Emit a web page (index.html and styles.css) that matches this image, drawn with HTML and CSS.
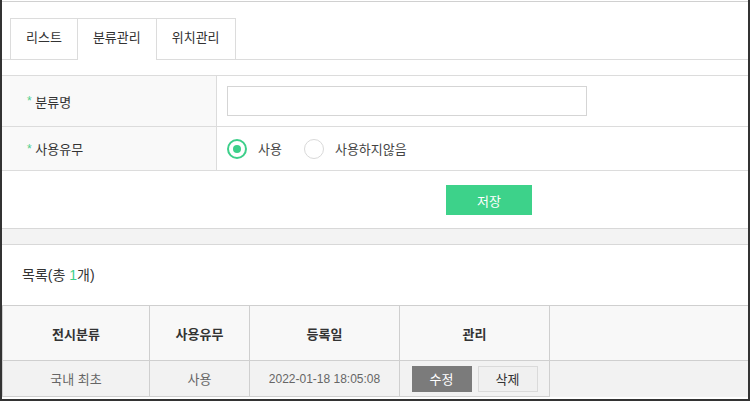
FILE: index.html
```html
<!DOCTYPE html>
<html lang="ko">
<head>
<meta charset="utf-8">
<title>분류관리</title>
<link rel="stylesheet" href="styles.css">
</head>
<body>
<div class="frame">
  <div class="page">
    <div class="tabs">
      <div class="tab">리스트</div>
      <div class="tab active">분류관리</div>
      <div class="tab">위치관리</div>
    </div>

    <div class="form">
      <div class="row row-name">
        <div class="label"><span class="req">*</span> 분류명</div>
        <div class="value"><input class="text-input" type="text"></div>
      </div>
      <div class="row row-use">
        <div class="label"><span class="req">*</span> 사용유무</div>
        <div class="value">
          <span class="radio checked"></span><span class="radio-label">사용</span>
          <span class="radio"></span><span class="radio-label">사용하지않음</span>
        </div>
      </div>
    </div>

    <div class="actions"><button class="save-btn">저장</button></div>

    <div class="band"></div>

    <div class="list-title">목록(총 <span class="count">1</span>개)</div>

    <div class="grid">
      <div class="cell head">전시분류</div>
      <div class="cell head">사용유무</div>
      <div class="cell head">등록일</div>
      <div class="cell head">관리</div>
      <div class="cell head last"></div>

      <div class="cell data">국내 최초</div>
      <div class="cell data">사용</div>
      <div class="cell data date">2022-01-18 18:05:08</div>
      <div class="cell data btns"><span class="btn-edit">수정</span><span class="btn-del">삭제</span></div>
      <div class="cell data last nob"></div>
    </div>
  </div>
</div>
</body>
</html>
```

FILE: styles.css
```css
html, body {
  margin: 0;
  padding: 0;
  background: #fff;
}

body {
  font-family: "Liberation Sans", "Noto Sans CJK KR", sans-serif;
  font-size: 13px;
  color: #333;
}

.frame {
  width: 750px;
  height: 401px;
  box-sizing: border-box;
  border-left: 2px solid #333;
  border-right: 2px solid #333;
  border-bottom: 2px solid #333;
  padding-top: 1px;
  overflow: hidden;
}

.page {
  border-top: 1px solid #d0d0d0;
}

/* Tabs */
.tabs {
  display: flex;
  align-items: flex-start;
  height: 41px;
  margin-top: 16px;
  padding-left: 8px;
  border-bottom: 1px solid #dcdcdc;
}

.tab {
  height: 40px;
  line-height: 38px;
  padding: 0 15px;
  border: 1px solid #dcdcdc;
  border-bottom: 0;
  margin-left: -1px;
  background: #fff;
  color: #333;
}

.tab:first-child {
  margin-left: 0;
}

.tab.active {
  height: 41px;
  position: relative;
  z-index: 1;
}

/* Form */
.form {
  margin-top: 15px;
  border-top: 1px solid #dcdcdc;
}

.row {
  display: flex;
  border-bottom: 1px solid #dcdcdc;
}

.row-name { height: 50px; }
.row-use { height: 43px; }

.label {
  width: 215px;
  flex: none;
  box-sizing: border-box;
  padding-left: 25px;
  background: #f9f9f9;
  border-right: 1px solid #dcdcdc;
  display: flex;
  align-items: center;
  color: #333;
  white-space: pre;
}

.req {
  color: #4fcf8c;
  font-size: 12px;
}

.value {
  flex: 1;
  display: flex;
  align-items: center;
  padding-left: 10px;
}

.text-input {
  width: 360px;
  height: 30px;
  box-sizing: border-box;
  border: 1px solid #d5d5d5;
  margin: 0;
  padding: 0 8px;
  outline: none;
  font: inherit;
}

.radio {
  width: 20px;
  height: 20px;
  box-sizing: border-box;
  border: 1px solid #d9d9d9;
  border-radius: 50%;
  flex: none;
  position: relative;
}

.radio.checked {
  border: 2px solid #3dcf8a;
}

.radio.checked::after {
  content: "";
  position: absolute;
  left: 4px;
  top: 4px;
  width: 8px;
  height: 8px;
  border-radius: 50%;
  background: #3dcf8a;
}

.radio-label {
  margin-left: 11px;
  margin-right: 22px;
  color: #444;
}

/* Save */
.actions {
  margin-top: 14px;
  padding-left: 444px;
  height: 30px;
}

.save-btn {
  width: 86px;
  height: 30px;
  border: 0;
  margin: 0;
  padding: 0;
  background: #3dd28a;
  color: #fff;
  font: inherit;
  font-size: 13px;
}

.band {
  margin-top: 13px;
  height: 15px;
  background: #f3f3f3;
  border-top: 1px solid #d8d8d8;
  border-bottom: 1px solid #d8d8d8;
}

.list-title {
  height: 60px;
  line-height: 60px;
  padding-left: 20px;
  font-size: 14px;
  color: #333;
}

.count {
  color: #3dcf8a;
}

/* Table */
.grid {
  display: grid;
  grid-template-columns: 147px 100px 150px 150px 1fr;
  border-top: 1px solid #cfcfcf;
  border-left: 1px solid #cfcfcf;
}

.cell {
  border-right: 1px solid #cfcfcf;
  border-bottom: 1px solid #cfcfcf;
  display: flex;
  align-items: center;
  justify-content: center;
}

.cell.last {
  border-right: 0;
}

.cell.head {
  height: 54px;
  background: #f8f8f8;
  font-weight: bold;
  color: #333;
}

.cell.data {
  height: 35px;
  background: #f2f2f2;
  color: #666;
}

.cell.date {
  font-size: 12px;
}

.cell.nob {
  border-bottom: 0;
  height: 36px;
}

.btns {
  gap: 6px;
}

.btn-edit,
.btn-del {
  width: 60px;
  height: 26px;
  box-sizing: border-box;
  display: flex;
  align-items: center;
  justify-content: center;
  font-size: 13px;
}

.btn-edit {
  background: #7b7b7b;
  color: #fff;
}

.btn-del {
  background: #f0f0f0;
  border: 1px solid #dadada;
  color: #333;
}
```
